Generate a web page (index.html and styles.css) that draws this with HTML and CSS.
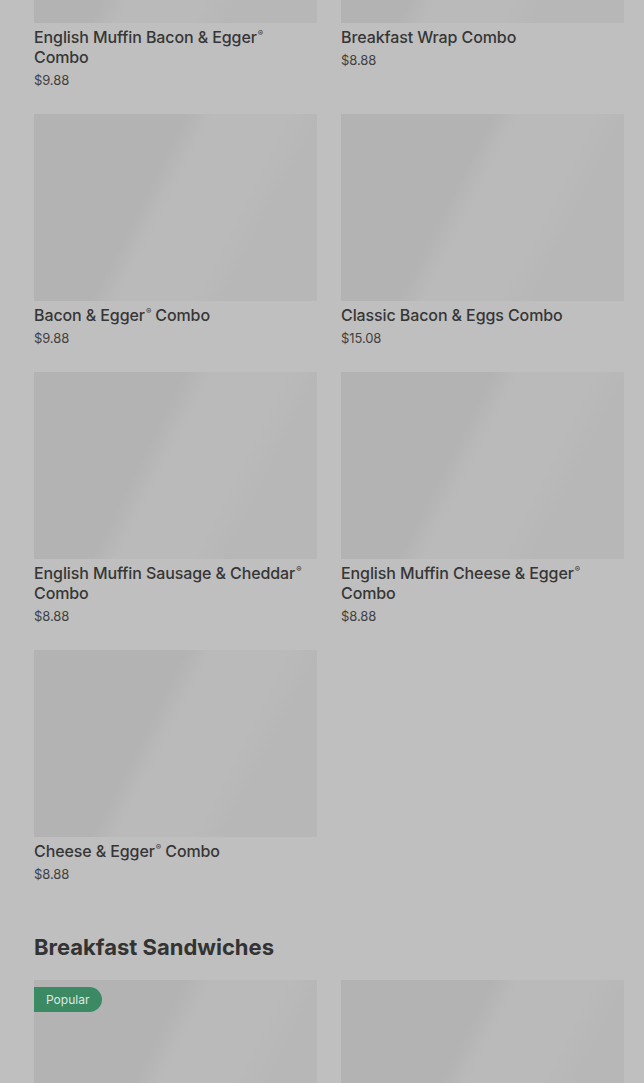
FILE: index.html
```html
<!DOCTYPE html>
<html lang="en">
<head>
<meta charset="utf-8">
<title>Menu</title>
<link rel="stylesheet" href="styles.css">
</head>
<body>
<main class="menu">
  <section class="category">
    <div class="grid">
      <article class="item">
        <div class="thumb"></div>
        <h3 class="name">English Muffin Bacon &amp; Egger<sup>®</sup> Combo</h3>
        <p class="price">$9.88</p>
      </article>
      <article class="item">
        <div class="thumb"></div>
        <h3 class="name">Breakfast Wrap Combo</h3>
        <p class="price">$8.88</p>
      </article>
      <article class="item">
        <div class="thumb"></div>
        <h3 class="name">Bacon &amp; Egger<sup>®</sup> Combo</h3>
        <p class="price">$9.88</p>
      </article>
      <article class="item">
        <div class="thumb"></div>
        <h3 class="name">Classic Bacon &amp; Eggs Combo</h3>
        <p class="price">$15.08</p>
      </article>
      <article class="item">
        <div class="thumb"></div>
        <h3 class="name">English Muffin Sausage &amp; Cheddar<sup>®</sup> Combo</h3>
        <p class="price">$8.88</p>
      </article>
      <article class="item">
        <div class="thumb"></div>
        <h3 class="name">English Muffin Cheese &amp; Egger<sup>®</sup> Combo</h3>
        <p class="price">$8.88</p>
      </article>
      <article class="item">
        <div class="thumb"></div>
        <h3 class="name">Cheese &amp; Egger<sup>®</sup> Combo</h3>
        <p class="price">$8.88</p>
      </article>
    </div>
  </section>
  <section class="category">
    <h2 class="category-title">Breakfast Sandwiches</h2>
    <div class="grid">
      <article class="item">
        <div class="thumb"><span class="badge">Popular</span></div>
      </article>
      <article class="item">
        <div class="thumb"></div>
      </article>
    </div>
  </section>
</main>
</body>
</html>
```
FILE: styles.css
```css
html, body {
  margin: 0;
  padding: 0;
  background: #bfbfbf;
}
body {
  font-family: Inter, "Noto Sans", sans-serif;
  color: #363636;
  overflow: hidden;
  height: 1083px;
}
.menu {
  padding: 0 20px 0 34px;
  margin-top: -164px;
}
.category + .category {
  margin-top: 50px;
}
.grid {
  display: grid;
  grid-template-columns: 1fr 1fr;
  column-gap: 24px;
  row-gap: 25px;
}
.item {
  margin: 0;
}
.thumb {
  position: relative;
  height: 187px;
  background: linear-gradient(117deg, #b3b3b3 0%, #b3b3b3 40%, #bababa 47%, #bababa 67%, #b7b7b7 76%, #b7b7b7 100%);
}
.name {
  margin: 4px 0 0;
  font-size: 16px;
  line-height: 20px;
  font-weight: 500;
  letter-spacing: -0.1px;
  color: #363636;
}
.name sup {
  font-size: 8px;
  line-height: 0;
  vertical-align: 7px;
  margin-left: 1px;
}
.price {
  margin: 4px 0 0;
  font-size: 13px;
  line-height: 18px;
  color: #3f3f3f;
  letter-spacing: -0.1px;
}
.category-title {
  margin: 0 0 19px;
  font-size: 22px;
  line-height: 28px;
  font-weight: 700;
  color: #333;
}
.badge {
  position: absolute;
  left: 0;
  top: 7px;
  height: 25px;
  line-height: 25px;
  padding: 0 13px 0 12px;
  background: #3b8a63;
  color: #dfe9e2;
  font-size: 12px;
  border-radius: 0 13px 13px 0;
}
```
